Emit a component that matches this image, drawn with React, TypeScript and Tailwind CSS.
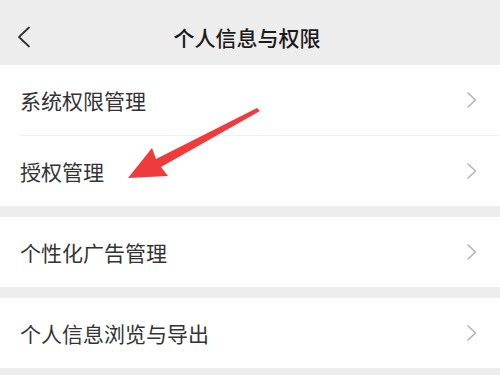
import * as React from 'react';

const rows = [
  ['系统权限管理', '授权管理'],
  ['个性化广告管理'],
  ['个人信息浏览与导出'],
];

function Chevron() {
  return (
    <svg width="12" height="18" viewBox="0 0 12 18" className="shrink-0">
      <path d="M2 2 L9.5 9 L2 16" fill="none" stroke="#b3b3b3" strokeWidth="1.6" strokeLinecap="round" strokeLinejoin="round" />
    </svg>
  );
}

function Row({ label }: { label: string }) {
  return (
    <div className="flex h-[70px] items-center justify-between bg-white pl-[20px] pr-[22px]">
      <span className="text-[21px] leading-none text-[#333333]">{label}</span>
      <Chevron />
    </div>
  );
}

export default function App() {
  return (
    <div
      className="relative h-[375px] w-[500px] overflow-hidden bg-[#ededed]"
      style={{ fontFamily: '"Noto Sans CJK SC", "Noto Sans", sans-serif' }}
    >
      {/* Header */}
      <div className="pt-[10px]">
        <div className="relative flex h-[55px] items-center justify-center pr-[6px]">
          <svg width="14" height="22" viewBox="0 0 14 22" className="absolute left-[17px] top-[16px]">
            <path d="M12 1.5 L2 11 L12 20.5" fill="none" stroke="#333333" strokeWidth="1.8" strokeLinecap="round" strokeLinejoin="round" />
          </svg>
          <span className="text-[21px] font-medium leading-none text-[#1a1a1a]">个人信息与权限</span>
        </div>
      </div>

      {/* Sections */}
      <div className="flex flex-col gap-[11px]">
        {rows.map((group, i) => (
          <div key={i} className="bg-white">
            {group.map((label, j) => (
              <React.Fragment key={label}>
                {j > 0 && <div className="ml-[20px] h-px bg-[#f0f0f0]" />}
                <Row label={label} />
              </React.Fragment>
            ))}
          </div>
        ))}
      </div>

      {/* Red annotation arrow */}
      <svg width="500" height="375" className="pointer-events-none absolute left-0 top-0">
        <polygon
          points="128,178 152,148 156,159 257,108 260,111 161,167 168,176"
          fill="#ef3b3b"
        />
      </svg>
    </div>
  );
}
